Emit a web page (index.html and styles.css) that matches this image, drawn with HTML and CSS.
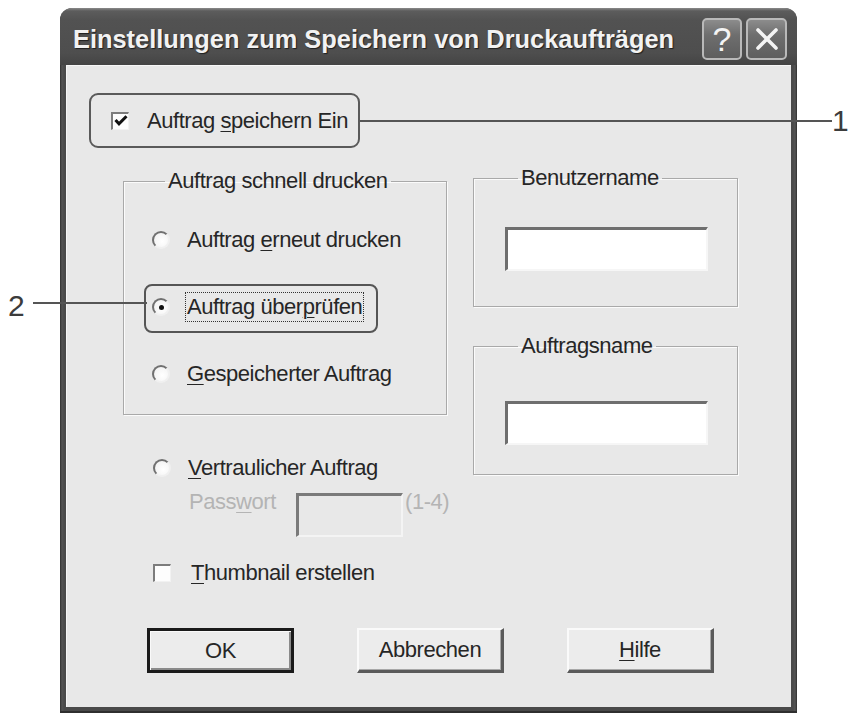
FILE: index.html
```html
<!DOCTYPE html>
<html lang="de">
<head>
<meta charset="utf-8">
<title>Einstellungen zum Speichern von Druckaufträgen</title>
<link rel="stylesheet" href="styles.css">
</head>
<body>
<div class="stage">
  <div class="window">
    <div class="titlebar">
      <span class="title">Einstellungen zum Speichern von Druckaufträgen</span>
      <div class="tb-buttons">
        <span class="tb-btn help">?</span>
        <span class="tb-btn close"><svg width="26" height="26" viewBox="0 0 26 26"><path d="M4 4 L22 22 M22 4 L4 22" stroke="#f4f4f4" stroke-width="3.6" stroke-linecap="round"/></svg></span>
      </div>
    </div>
    <div class="client">
      <div class="save-box">
        <span class="checkbox"><svg width="14" height="14" viewBox="0 0 14 14"><path d="M1.5 6 L5 9.8 L12.5 2.2" fill="none" stroke="#111" stroke-width="3"/></svg></span>
        <span class="label">Auftrag <u>s</u>peichern Ein</span>
      </div>
      <div class="main">
        <div class="left-col">
          <fieldset class="group quick">
            <legend>Auftrag schnell drucken</legend>
            <div class="option"><span class="radio"></span><span class="label">Auftrag <u>e</u>rneut drucken</span></div>
            <div class="option marked"><span class="radio checked"></span><span class="label focus">Auftrag über<u>p</u>rüfen</span></div>
            <div class="option"><span class="radio"></span><span class="label"><u>G</u>espeicherter Auftrag</span></div>
          </fieldset>
          <div class="option confidential"><span class="radio"></span><span class="label"><u>V</u>ertraulicher Auftrag</span></div>
          <div class="pw-row">
            <span class="pw-label">Pass<u>w</u>ort</span>
            <span class="textbox disabled"></span>
            <span class="pw-hint">(1-4)</span>
          </div>
          <div class="option thumb"><span class="checkbox empty"></span><span class="label"><u>T</u>humbnail erstellen</span></div>
        </div>
        <div class="right-col">
          <fieldset class="group user">
            <legend>Benutzername</legend>
            <span class="textbox"></span>
          </fieldset>
          <fieldset class="group job">
            <legend>Auftragsname</legend>
            <span class="textbox"></span>
          </fieldset>
        </div>
      </div>
      <div class="buttons">
        <span class="btn default">OK</span>
        <span class="btn">Abbrechen</span>
        <span class="btn"><u>H</u>ilfe</span>
      </div>
    </div>
  </div>
  <span class="callout-line one"></span>
  <span class="callout-num one">1</span>
  <span class="callout-line two"></span>
  <span class="callout-num two">2</span>
</div>
</body>
</html>
```
FILE: styles.css
```css
html, body {
  margin: 0;
  padding: 0;
  background: #ffffff;
}

body {
  font-family: "Liberation Sans", Arial, sans-serif;
  font-size: 22px;
  letter-spacing: -0.45px;
  color: #262626;
}

u {
  text-decoration-thickness: 1px;
  text-underline-offset: 3px;
}

.stage {
  position: relative;
  width: 851px;
  height: 717px;
  overflow: hidden;
}

.window {
  margin: 8px 0 0 60px;
  width: 737px;
  height: 705px;
  box-sizing: border-box;
  background: linear-gradient(90deg, #2f2f2f 0, #555 2px, #4a4a4a 4px, #4a4a4a calc(100% - 4px), #555 calc(100% - 2px), #2f2f2f 100%);
  border-radius: 12px 12px 0 0;
  display: flex;
  flex-direction: column;
  box-shadow: inset 0 -2px 0 #2f2f2f;
}

.titlebar {
  height: 57px;
  box-sizing: border-box;
  padding: 6px 10px 0 13px;
  display: flex;
  align-items: center;
  border-radius: 12px 12px 0 0;
  background: linear-gradient(180deg, #8a8a8a 0, #5c5c5c 3px, #525252 12px, #4e4e4e 45px, #444 100%);
}

.title {
  flex: 1;
  font-family: "Liberation Sans", "DejaVu Sans", sans-serif;
  font-weight: bold;
  font-size: 25.4px;
  letter-spacing: 0;
  color: #f2f2f2;
  text-shadow: 1px 1px 1px #1e1e1e;
  white-space: nowrap;
}

.tb-buttons {
  align-self: flex-start;
  margin-top: 4px;
  display: flex;
  gap: 4px;
}

.tb-btn {
  width: 40px;
  height: 42px;
  box-sizing: border-box;
  border: 2px solid #b9b9b9;
  border-radius: 5px;
  background: linear-gradient(180deg, #8c8c8c 0, #6e6e6e 40%, #5e5e5e 100%);
  display: flex;
  align-items: center;
  justify-content: center;
  color: #f4f4f4;
}

.tb-btn.help {
  font-size: 34px;
  letter-spacing: 0;
  line-height: 1;
}

.tb-btn.close {
  width: 41px;
}

.client {
  margin: 0 6px 6px 6px;
  flex: 1;
  background: #e8e8e8;
  padding: 28px 0 0 23px;
  box-sizing: border-box;
  box-shadow: inset 1px 1px 0 #f6f6f6;
}

.save-box {
  width: 271px;
  height: 55px;
  box-sizing: border-box;
  border: 2px solid #5a5a5a;
  border-radius: 9px;
  display: flex;
  align-items: center;
  padding-left: 20px;
  white-space: nowrap;
}

.save-box .label {
  margin-left: 18px;
}

.checkbox {
  width: 18px;
  height: 18px;
  box-sizing: border-box;
  flex: none;
  background: #fdfdfd;
  border-style: solid;
  border-width: 2px 1px 1px 2px;
  border-color: #7c7c7c #f2f2f2 #f2f2f2 #7c7c7c;
  display: flex;
  align-items: center;
  justify-content: center;
}

.radio {
  width: 18px;
  height: 18px;
  box-sizing: border-box;
  flex: none;
  border-radius: 50%;
  background: radial-gradient(circle at 60% 60%, #ffffff 0, #f4f4f4 70%);
  border-style: solid;
  border-width: 2px;
  border-color: #707070 #f0f0f0 #f0f0f0 #707070;
  display: flex;
  align-items: center;
  justify-content: center;
}

.radio.checked::after {
  content: "";
  width: 5px;
  height: 5px;
  border-radius: 50%;
  background: #111;
}

.main {
  margin: 16px 0 0 34px;
  display: flex;
  align-items: flex-start;
  gap: 26px;
}

.left-col {
  width: 324px;
  padding-top: 3px;
}

.group {
  margin: 0;
  min-width: 0;
  box-sizing: border-box;
  border: 1px solid #a9a9a9;
  box-shadow: inset 1px 1px 0 #fbfbfb, 1px 1px 0 #fbfbfb;
}

.group legend {
  margin-left: 13px;
  padding: 0 3px;
  line-height: 28px;
  white-space: nowrap;
}

.quick {
  width: 324px;
  padding: 30px 0 25px 28px;
}

.option {
  display: flex;
  align-items: center;
  height: 30px;
}

.option + .option {
  margin-top: 37px;
}

.option .label {
  margin-left: 17px;
  white-space: nowrap;
}

.option.marked {
  position: relative;
}

.option.marked::before {
  content: "";
  position: absolute;
  left: -8px;
  top: -8px;
  width: 230px;
  height: 45px;
  border: 2px solid #555;
  border-radius: 8px;
}

.label.focus {
  margin-left: 15px;
  padding: 0 1px;
  line-height: 28px;
  border: 1px dotted #333;
}

.confidential {
  margin: 38px 0 0 30px;
}

.pw-row {
  margin-top: 4px;
  display: flex;
  align-items: flex-start;
  height: 50px;
  white-space: nowrap;
}

.pw-label {
  margin-left: 66px;
  width: 107px;
  flex: none;
  line-height: 30px;
  color: #b4b4b4;
}

.pw-hint {
  margin-left: 2px;
  line-height: 30px;
  color: #b4b4b4;
}

.textbox {
  display: block;
  box-sizing: border-box;
  width: 203px;
  height: 44px;
  flex: none;
  background: #ffffff;
  border-style: solid;
  border-width: 3px 2px 2px 3px;
  border-color: #6e6e6e #f6f6f6 #f6f6f6 #6e6e6e;
}

.textbox.disabled {
  width: 107px;
  margin-top: 6px;
  background: #e8e8e8;
  border-color: #7a7a7a #f4f4f4 #f4f4f4 #7a7a7a;
}

.thumb {
  margin: 21px 0 0 30px;
}

.thumb .label {
  margin-left: 20px;
}

.right-col {
  width: 265px;
  display: flex;
  flex-direction: column;
}

.user {
  width: 265px;
  padding: 35px 0 35px 31px;
}

.job {
  width: 265px;
  margin-top: 25px;
  padding: 41px 0 29px 31px;
}

.buttons {
  margin: 40px 0 0 58px;
  display: flex;
  gap: 63px;
}

.btn {
  width: 147px;
  height: 45px;
  box-sizing: border-box;
  display: flex;
  align-items: center;
  justify-content: center;
  background: #ececec;
  border-style: solid;
  border-width: 2px 3px 3px 2px;
  border-color: #fafafa #5a5a5a #5a5a5a #fafafa;
  box-shadow: inset -1px -1px 0 #a8a8a8;
}

.btn.default {
  border: 3px solid #1a1a1a;
  box-shadow: inset 1px 1px 0 #fafafa, inset -2px -2px 0 #8a8a8a;
}

.callout-line {
  position: absolute;
  height: 2px;
  background: #555;
}

.callout-line.one {
  left: 360px;
  top: 120px;
  width: 472px;
}

.callout-line.two {
  left: 33px;
  top: 302px;
  width: 114px;
}

.callout-num {
  position: absolute;
  font-size: 30px;
  letter-spacing: 0;
  line-height: 30px;
  color: #3c3c3c;
}

.callout-num.one {
  left: 832px;
  top: 106px;
}

.callout-num.two {
  left: 8px;
  top: 291px;
}
```
